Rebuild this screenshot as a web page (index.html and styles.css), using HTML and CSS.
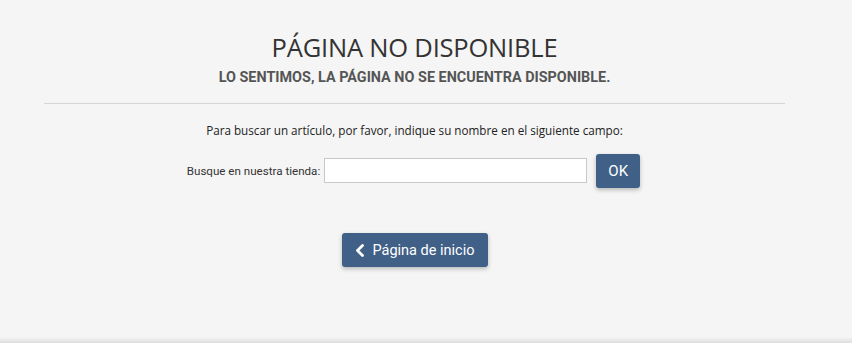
FILE: index.html
```html
<!DOCTYPE html>
<html lang="es">
<head>
  <meta charset="UTF-8" />
  <title>Página no disponible</title>
  <link rel="stylesheet" href="styles.css">
</head>
<body>
  <main class="page">
    <header class="head">
      <h1>PÁGINA NO DISPONIBLE</h1>
      <h2>LO SENTIMOS, LA PÁGINA NO SE ENCUENTRA DISPONIBLE.</h2>
    </header>

    <section class="search">
      <p>Para buscar un artículo, por favor, indique su nombre en el siguiente campo:</p>
      <form class="search-form">
        <label for="q">Busque en nuestra tienda:</label>
        <input type="text" id="q" name="q">
        <button type="submit" class="btn btn-ok">OK</button>
      </form>
    </section>

    <div class="home">
      <a href="#" class="btn btn-home">
        <svg width="10" height="13" viewBox="0 0 10 13"><path d="M7.5 1.5 L2.5 6.5 L7.5 11.5" fill="none" stroke="#fff" stroke-width="2.8" stroke-linecap="round" stroke-linejoin="round"/></svg>
        Página de inicio
      </a>
    </div>
  </main>
  <div class="bottom-shade"></div>
</body>
</html>
```

FILE: styles.css
```css
* {
  margin: 0;
  padding: 0;
  box-sizing: border-box;
}

html, body {
  height: 100%;
  overflow: hidden;
}

body {
  background: #f5f5f5;
  color: #333;
  font-family: 'Open Sans', sans-serif;
}

.page {
  height: 337px;
  width: 741px;
  margin-left: 44px;
}

.head {
  text-align: center;
  padding-top: 30px;
  padding-bottom: 16px;
  border-bottom: 1px solid #d6d6d6;
}

.head h1 {
  font-size: 25.5px;
  font-weight: 400;
  line-height: 34px;
  color: #333;
  letter-spacing: -0.2px;
}

.head h2 {
  font-family: 'Roboto', sans-serif;
  font-size: 14.4px;
  font-weight: 700;
  line-height: 18px;
  color: #555;
  margin-top: 5px;
}

.search {
  text-align: center;
  padding-top: 18px;
}

.search p {
  font-size: 11.7px;
  line-height: 17px;
  color: #222;
}

.search-form {
  display: flex;
  justify-content: center;
  align-items: center;
  gap: 4px;
  margin-top: 15px;
  padding-right: 2px;
}

.search-form label {
  font-family: 'Roboto', sans-serif;
  font-size: 11.6px;
  color: #333;
}

.search-form input {
  width: 263px;
  height: 25px;
  border: 1px solid #c8c8c8;
  background: #fff;
  margin-right: 5px;
  margin-bottom: 2px;
}

.btn {
  font-family: 'Roboto', sans-serif;
  background: #406087;
  color: #fff;
  border: none;
  border-radius: 3px;
  box-shadow: 0 2px 4px rgba(0, 0, 0, 0.25);
  text-decoration: none;
}

.btn-ok {
  width: 44px;
  height: 34px;
  font-size: 15px;
}

.home {
  display: flex;
  justify-content: center;
  padding-top: 45px;
  padding-left: 1px;
}

.btn-home {
  display: flex;
  align-items: center;
  gap: 7px;
  height: 34px;
  padding: 0 13px 0 13px;
  font-size: 14.5px;
}

.bottom-shade {
  height: 6px;
  background: linear-gradient(#f5f5f5, #dedede);
}
```
